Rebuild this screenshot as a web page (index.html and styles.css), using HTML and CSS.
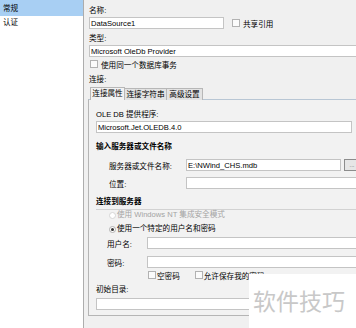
FILE: index.html
```html
<!DOCTYPE html>
<html lang="zh-CN">
<head>
    <meta charset="UTF-8">
    <title>数据源属性</title>
    <link rel="stylesheet" href="styles.css">
</head>
<body>
    <div class="dialog">
        <ul class="nav">
            <li class="nav-item selected">常规</li>
            <li class="nav-item">认证</li>
        </ul>

        <div class="main">
            <div class="label">名称:</div>
            <div class="row">
                <input class="field name-field" value="DataSource1" readonly>
                <label class="check share"><span class="box"></span>共享引用</label>
            </div>

            <div class="label type-label">类型:</div>
            <input class="field type-field" value="Microsoft OleDb Provider" readonly>
            <label class="check same-tx"><span class="box"></span>使用同一个数据库事务</label>

            <div class="label conn-label">连接:</div>
            <div class="tabs">
                <div class="tab tab-props active">连接属性</div>
                <div class="tab tab-string">连接字符串</div>
                <div class="tab tab-advanced">高级设置</div>
            </div>

            <div class="panel">
                <div class="label ole-label">OLE DB 提供程序:</div>
                <input class="field ole-field" value="Microsoft.Jet.OLEDB.4.0" readonly>

                <div class="section">输入服务器或文件名称</div>
                <div class="row server-row">
                    <span class="row-label server-label">服务器或文件名称:</span>
                    <input class="field server-field" value="E:\NWind_CHS.mdb" readonly>
                    <button class="browse">...</button>
                </div>
                <div class="row location-row">
                    <span class="row-label server-label">位置:</span>
                    <input class="field location-field" value="" readonly>
                </div>

                <div class="section section-server">连接到服务器</div>
                <div class="divider"></div>
                <div class="radio-row disabled"><span class="radio"></span>使用 Windows NT 集成安全模式</div>
                <div class="radio-row second"><span class="radio on"></span>使用一个特定的用户名和密码</div>

                <div class="row user-row">
                    <span class="row-label user-label">用户名:</span>
                    <input class="field user-field" value="" readonly>
                </div>
                <div class="row user-row pass-row">
                    <span class="row-label user-label">密码:</span>
                    <input class="field user-field" value="" readonly>
                </div>
                <div class="row pw-checks">
                    <label class="check"><span class="box"></span>空密码</label>
                    <label class="check save-pw"><span class="box"></span>允许保存我的密码</label>
                </div>

                <div class="label catalog-label">初始目录:</div>
                <input class="field catalog-field" value="" readonly>
            </div>
        </div>

        <div class="watermark">软件技巧</div>
    </div>
</body>
</html>
```

FILE: styles.css
```css
* {
    box-sizing: border-box;
}

body {
    margin: 0;
    font-family: "Liberation Sans", "Noto Sans CJK SC", sans-serif;
    font-size: 7.6px;
    color: #000;
    background-color: #f0f0f0;
    overflow: hidden;
}

.dialog {
    display: flex;
    width: 356px;
    height: 328px;
    overflow: hidden;
    position: relative;
}

/* left page list */
.nav {
    list-style: none;
    margin: 0;
    padding: 0;
    width: 84px;
    flex: none;
    background-color: #fff;
    border-right: 1px solid #adadad;
}

.nav-item {
    height: 13px;
    line-height: 13px;
    padding-left: 3px;
}

.nav-item.selected {
    height: 16px;
    padding-top: 2px;
    background-color: #a8cff3;
}

.main {
    flex: none;
    width: 290px;
    padding: 5px 0 0 5px;
}

.label {
    height: 12px;
    line-height: 12px;
}

.row {
    display: flex;
    align-items: center;
}

.field {
    display: block;
    height: 12px;
    margin: 0;
    padding: 0 1px;
    border: 1px solid #c4c4c4;
    background-color: #fff;
    font: inherit;
    color: #000;
    outline: none;
}

.check {
    display: flex;
    align-items: center;
    gap: 3px;
    height: 10px;
}

.box {
    width: 8px;
    height: 8px;
    border: 1px solid #b2b2b2;
    background-color: #fbfbfb;
}

.name-field {
    width: 135px;
}

.share {
    margin-left: 8px;
}

.type-label {
    margin-top: 4px;
}

.type-field {
    width: 275px;
}

.same-tx {
    margin: 2px 0 0 1px;
}

.conn-label {
    margin-top: 5px;
}

/* tabs */
.tabs {
    display: flex;
    align-items: flex-end;
    height: 13px;
    margin: 1px 0 0 1px;
}

.tab {
    height: 12px;
    line-height: 11px;
    text-align: center;
    border: 1px solid #b7b7b7;
    border-bottom: none;
    background-color: #e3e3e3;
    margin-left: -1px;
}

.tab.active {
    height: 13px;
    line-height: 12px;
    background-color: #f2f2f2;
    position: relative;
    z-index: 1;
    margin-left: 0;
}

.tab-props {
    width: 35px;
}

.tab-string {
    width: 43px;
}

.tab-advanced {
    width: 37px;
}

.panel {
    width: 280px;
    height: 217px;
    margin: -1px 0 0 -1px;
    padding-left: 7px;
    border: 1px solid #b5b5b5;
    border-top-color: #b8c6d4;
    background-color: #f2f2f2;
}

.ole-label {
    margin-top: 9px;
}

.ole-field,
.catalog-field {
    width: 256px;
}

.section {
    height: 12px;
    line-height: 12px;
    margin-top: 8px;
    font-weight: bold;
}

.server-row {
    margin-top: 6px;
    padding-left: 13px;
    height: 12px;
}

.server-label {
    width: 77px;
    flex: none;
}

.server-field {
    width: 155px;
}

.browse {
    width: 16px;
    height: 12px;
    margin-left: 3px;
    padding: 0;
    flex: none;
    border: 1px solid #8c8c8c;
    background-color: #e6e6e6;
    font: inherit;
    font-size: 6px;
    line-height: 6px;
    color: #666;
}

.location-row {
    margin-top: 6px;
    padding-left: 13px;
    height: 12px;
}

.location-field {
    width: 180px;
}

.section-server {
    margin-top: 7px;
}

.divider {
    height: 1px;
    margin-top: 1px;
    background-color: #d2d2d2;
}

.radio-row {
    display: flex;
    align-items: center;
    gap: 1px;
    height: 10px;
    line-height: 10px;
    padding-left: 13px;
}

.radio-row.second {
    margin-top: 4px;
}

.radio-row.disabled {
    color: #a3a3a3;
}

.radio {
    width: 7px;
    height: 7px;
    border: 1px solid #b0b0b0;
    border-radius: 50%;
    background-color: #fff;
    display: flex;
    align-items: center;
    justify-content: center;
}

.radio-row.disabled .radio {
    border-color: #d6d6d6;
}

.radio.on::after {
    content: "";
    width: 3px;
    height: 3px;
    border-radius: 50%;
    background-color: #333;
}

.user-row {
    margin-top: 3px;
    padding-left: 11px;
    height: 12px;
}

.pass-row {
    margin-top: 7px;
}

.user-label {
    width: 40px;
    flex: none;
}

.user-field {
    width: 215px;
}

.pw-checks {
    margin-top: 2px;
    padding-left: 52px;
    height: 10px;
    gap: 1px;
}

.pw-checks .check {
    gap: 1px;
}

.save-pw {
    margin-left: 14px;
}

.catalog-label {
    margin-top: 4px;
}

.catalog-field {
    margin-top: 2px;
}

/* site stamp in the corner */
.watermark {
    position: absolute;
    right: 0;
    bottom: 0;
    width: 107px;
    height: 54px;
    padding: 15px 0 0 4px;
    background-color: #fff;
    font-family: "Noto Sans CJK SC", sans-serif;
    font-size: 23px;
    line-height: 23px;
    color: #c8c8c8;
}
```
